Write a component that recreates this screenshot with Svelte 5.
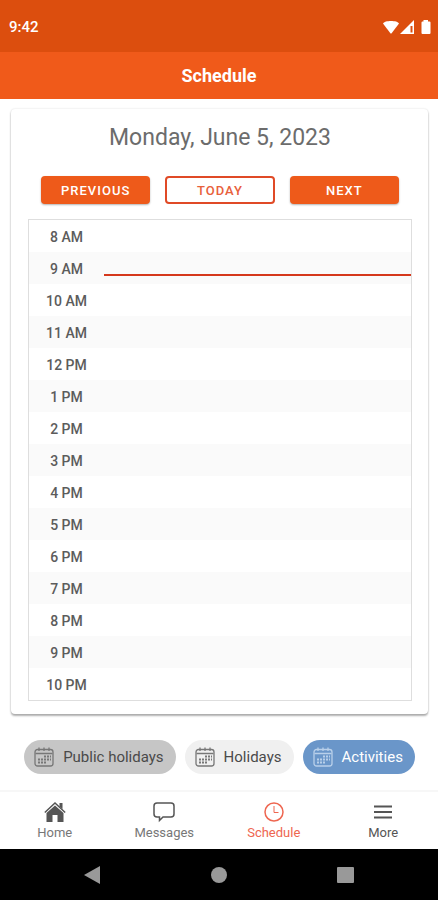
<script lang="ts">
	const hours = ['8 AM', '9 AM', '10 AM', '11 AM', '12 PM', '1 PM', '2 PM', '3 PM', '4 PM', '5 PM', '6 PM', '7 PM', '8 PM', '9 PM', '10 PM'];
	const currentHour = '9 AM';

	let filters = $state([
		{ label: 'Public holidays', kind: 'public', on: true },
		{ label: 'Holidays', kind: 'holidays', on: true },
		{ label: 'Activities', kind: 'activities', on: true }
	]);

	const tabs = [
		{ label: 'Home', icon: 'home' },
		{ label: 'Messages', icon: 'messages' },
		{ label: 'Schedule', icon: 'schedule' },
		{ label: 'More', icon: 'more' }
	];

	let active = $state('schedule');
</script>

<div class="screen">
	<div class="status-bar">
		<span>9:42</span>
		<svg class="status-icons" viewBox="0 0 48 16" aria-hidden="true">
			<path d="M0 4.500C1.500 1.200 14.500 1.200 16 4.500L8.800 14Q8 15 7.200 14Z" />
			<path d="M17 15L31 1V15Z" />
			<path class="gap" d="M27.500 7H29.500V13.500H27.500Z" />
			<path d="M40.500 1H45V2.500H46.500Q47.500 2.500 47.500 3.500V14Q47.500 15 46.500 15H39.500Q38.500 15 38.500 14V3.500Q38.500 2.500 39.500 2.500H40.500Z" />
		</svg>
	</div>

	<header class="app-bar"><h1>Schedule</h1></header>

	<main>
		<section class="card">
			<h2>Monday, June 5, 2023</h2>
			<div class="day-nav">
				<button class="btn">PREVIOUS</button>
				<button class="btn outline">TODAY</button>
				<button class="btn">NEXT</button>
			</div>
			<ul class="hours">
				{#each hours as hour}
				<li>
					<span class="hour">{hour}</span>
					<span class="slot">
						{#if hour === currentHour}<span class="now"></span>{/if}
					</span>
				</li>
				{/each}
			</ul>
		</section>

		<div class="filters">
			{#each filters as filter}
			<button class="chip {filter.kind}" aria-pressed={filter.on} onclick={() => (filter.on = !filter.on)}>
				<svg viewBox="0 0 20 20" aria-hidden="true">
					<rect x="1" y="2.500" width="18" height="16.500" rx="2.500" />
					<path d="M1.500 6.500H18.500M5 .5V4M10 .5V4M15 .5V4" />
					<path class="days" d="M10 9.500H17M4 12.500H17M4 15.500H13" />
				</svg>
				{filter.label}
			</button>
			{/each}
		</div>
	</main>

	<nav class="tabs">
		{#each tabs as tab}
		<button class="tab {tab.icon}" class:active={active === tab.icon} onclick={() => (active = tab.icon)}>
			<svg viewBox="0 0 22 22" aria-hidden="true">
				{#if tab.icon === 'home'}
				<path class="solid" d="M11 4.500L19.500 12V21H13.500V14H8.500V21H2.500V12Z" />
				<path class="solid" d="M15.500 2H18.500V8L15.500 5.500Z" />
				<path d="M.8 11.500L11 2L21.200 11.500" />
				{:else if tab.icon === 'messages'}
				<path d="M4 2H18Q21 2 21 5V13Q21 16 18 16H10L6.500 19.500V16H4Q1 16 1 13V5Q1 2 4 2Z" />
				{:else if tab.icon === 'schedule'}
				<circle cx="11" cy="11" r="9" />
				<path class="hands" d="M11 5V11.500H15.500" />
				{:else}
				<path class="menu" d="M2 5.500H20M2 11H20M2 16.500H20" />
				{/if}
			</svg>
			{tab.label}
		</button>
		{/each}
	</nav>

	<div class="system-bar">
		<button aria-label="Back"><svg viewBox="0 0 18 18"><path d="M17 0V18L1 9Z" /></svg></button>
		<button aria-label="Home screen"><svg viewBox="0 0 18 18"><circle cx="9" cy="9" r="8" /></svg></button>
		<button aria-label="Recent apps"><svg viewBox="0 0 18 18"><rect x="0" y="1" width="17" height="16" rx="1" /></svg></button>
	</div>
</div>

<style>
	:global(body) { background: #fff; }
	.screen { min-height: 100vh; display: flex; flex-direction: column; font-family: Roboto, "Liberation Sans", sans-serif; color: #555; }
	button { font-family: inherit; cursor: pointer; }

	.status-bar { display: flex; align-items: center; justify-content: space-between; height: 52px; padding: 2px 7px 0 9px; box-sizing: border-box; background: #dc4e0e; color: #fff; font-size: 15px; font-weight: 500; }
	.status-icons { width: 48px; height: 16px; fill: #fff; }
	.status-icons .gap { fill: #dc4e0e; }
	.app-bar { display: flex; align-items: center; justify-content: center; height: 47px; background: #f05a1a; }
	.app-bar h1 { margin: 0; font-size: 18px; font-weight: 700; color: #fff; }

	main { flex: 1; padding: 10px 10px 16px 11px; }
	.card { padding: 13px 16px 13px 17px; border-radius: 4px; background: #fff; box-shadow: 0 2px 2px rgba(0,0,0,0.3), 0 0 2px rgba(0,0,0,0.16); }
	.card h2 { margin: 0; font-size: 23px; line-height: 32px; font-weight: 400; text-align: center; color: #6c6c6c; }
	.day-nav { display: flex; gap: 15px; padding: 0 13px; margin: 22px 0 15px; }
	.btn { flex: 1; height: 28px; padding: 0; border: 2px solid #ee5a1a; border-radius: 4px; background: #ee5a1a; color: #fff; font-size: 13px; font-weight: 500; letter-spacing: 1px; box-shadow: 0 1px 2px rgba(0,0,0,0.3); }
	.btn.outline { border-color: #e04a26; background: #fff; color: #e8603c; box-shadow: none; }

	.hours { list-style: none; margin: 0; padding: 0; border: 1px solid #dedede; }
	.hours li { display: flex; height: 32px; }
	.hours li:nth-child(even) { background: #fafafa; }
	.hour { width: 75px; line-height: 34px; text-align: center; font-size: 14px; font-weight: 500; color: #5c5c5c; }
	.slot { flex: 1; padding-top: 22px; }
	.now { display: block; height: 2px; background: #d5381c; }

	.filters { display: flex; justify-content: center; gap: 9px; margin-top: 26px; }
	.chip { display: flex; align-items: center; gap: 9px; height: 34px; padding: 0 12px 0 10px; border: none; border-radius: 17px; font-size: 15px; color: #4a4a4a; }
	.chip svg { width: 20px; height: 20px; fill: none; stroke: #777; stroke-width: 1.3; }
	.chip .days { stroke-width: 2; stroke-dasharray: 2 1; }
	.chip.public { background: #c6c6c6; }
	.chip.holidays { background: #f0f0f0; }
	.chip.activities { background: #6a96c9; color: #fff; }
	.chip.activities svg { stroke: #b9d0ea; }

	.tabs { display: flex; height: 59px; box-sizing: border-box; border-top: 2px solid #f7f7f7; background: #fff; }
	.tab { flex: 1; display: flex; flex-direction: column; align-items: center; gap: 2px; padding: 9px 0 0; border: none; background: none; font-size: 13px; line-height: 16px; color: #777; }
	.tab svg { width: 22px; height: 22px; fill: none; stroke: #555; stroke-width: 1.5; }
	.tab .solid { fill: #555; stroke: none; }
	.tab .hands { stroke-width: 1; }
	.tab .menu { stroke-width: 2; }
	.tab.more { color: #555; }
	.tab.active { color: #ee6650; }
	.tab.active svg { stroke: #ee6650; }

	.system-bar { display: flex; justify-content: center; height: 51px; background: #000; }
	.system-bar button { display: flex; align-items: center; justify-content: center; width: 127px; padding: 0; border: none; background: none; }
	.system-bar svg { width: 18px; height: 18px; fill: #999; }
</style>
